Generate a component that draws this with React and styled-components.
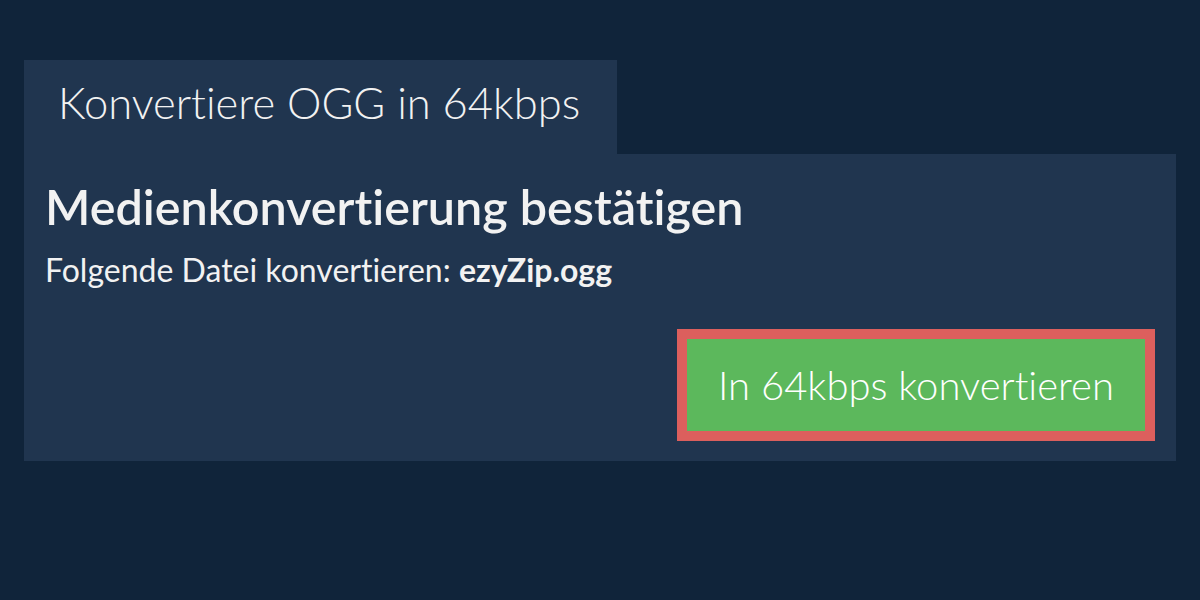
import React from "react";
import styled, { createGlobalStyle } from "styled-components";

const Global = createGlobalStyle`
  html, body { margin: 0; padding: 0; }
  body {
    background: #10243a;
    font-family: Lato, "Noto Sans", sans-serif;
    font-variant-ligatures: none;
    color: #f2f2f2;
    width: 1200px;
    height: 600px;
    overflow: hidden;
  }
`;

const Page = styled.div`
  padding: 60px 24px 0 24px;
`;

const Tab = styled.div`
  display: inline-block;
  background: #20354f;
  padding: 0 35px 0 34px;
  height: 94px;
  line-height: 84px;
  font-size: 43.5px;
  font-weight: 300;
  width: 524px;
  white-space: nowrap;
`;

const Panel = styled.div`
  background: #20354f;
  padding: 20px 21px 20px 21px;
  height: 267px;
  display: flex;
  flex-direction: column;
`;

const Heading = styled.h1`
  margin: 0;
  font-size: 48.5px;
  font-weight: 600;
  line-height: 64px;
  white-space: nowrap;
`;

const Sub = styled.p`
  margin: 14px 0 0 0;
  font-size: 32px;
  font-weight: 400;
  line-height: 36px;
  white-space: nowrap;
  b { font-weight: 700; }
`;

const Actions = styled.div`
  display: flex;
  justify-content: flex-end;
  margin-top: 41px;
`;

const Button = styled.button`
  background: #5cb85c;
  border: 10px solid #dc5f5d;
  color: #ffffff;
  font-family: Lato, sans-serif;
  font-variant-ligatures: none;
  font-weight: 300;
  font-size: 40px;
  width: 478px;
  height: 112px;
  padding: 0;
  cursor: pointer;
`;

export default function App() {
  return (
    <>
      <Global />
      <Page>
        <Tab>Konvertiere OGG in 64kbps</Tab>
        <Panel>
          <Heading>Medienkonvertierung bestätigen</Heading>
          <Sub>
            Folgende Datei konvertieren: <b>ezyZip.ogg</b>
          </Sub>
          <Actions>
            <Button>In 64kbps konvertieren</Button>
          </Actions>
        </Panel>
      </Page>
    </>
  );
}
